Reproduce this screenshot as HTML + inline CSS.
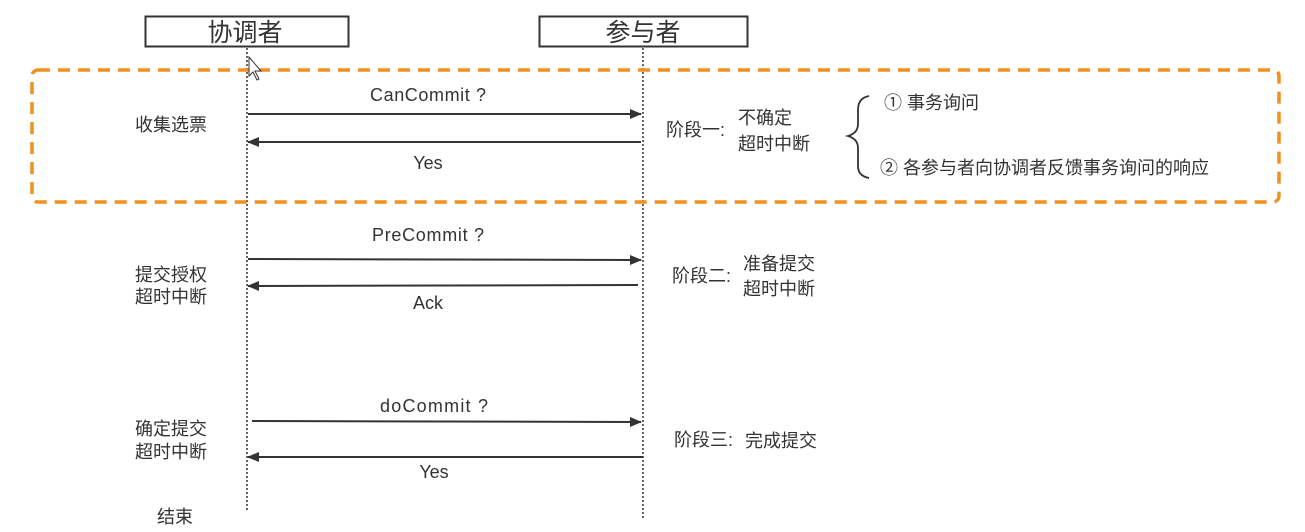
<!DOCTYPE html>
<html><head><meta charset="utf-8"><style>
html,body{margin:0;padding:0;background:#fff;}
svg{display:block;}
text{font-family:"Liberation Sans","Noto Sans CJK SC",sans-serif;fill:#333;}
</style></head><body>
<svg width="1305" height="532" viewBox="0 0 1305 532" xmlns="http://www.w3.org/2000/svg">
<defs>
<marker id="a" markerWidth="12" markerHeight="10" refX="11" refY="5" orient="auto" markerUnits="userSpaceOnUse">
<path d="M0,0 L12,5 L0,10 Z" fill="#333"/></marker>
</defs>
<rect x="145.5" y="16.5" width="203" height="30" fill="none" stroke="#333" stroke-width="2"/>
<rect x="539.5" y="16.5" width="208" height="30" fill="none" stroke="#333" stroke-width="2"/>
<text x="245" y="41" font-size="25" text-anchor="middle">协调者</text>
<text x="643" y="41" font-size="25" text-anchor="middle">参与者</text>
<line x1="247" y1="48" x2="247" y2="512" stroke="#333" stroke-width="1.5" stroke-dasharray="2,2"/>
<line x1="643" y1="48" x2="643" y2="518" stroke="#333" stroke-width="1.5" stroke-dasharray="2,2"/>
<rect x="32" y="70" width="1247" height="132" rx="6" fill="none" stroke="#f0901e" stroke-width="3.5" stroke-dasharray="12,8"/>
<path d="M249,57 L249,76 L253,72 L257,80 L259,79 L255,71 L261,71 Z" fill="#fff" stroke="#333" stroke-width="1"/>
<g stroke="#333" stroke-width="2">
<line x1="248" y1="114" x2="641" y2="114" marker-end="url(#a)"/>
<line x1="641" y1="142" x2="248" y2="142" marker-end="url(#a)"/>
<line x1="248" y1="259" x2="641" y2="260" marker-end="url(#a)"/>
<line x1="638" y1="285" x2="248" y2="286" marker-end="url(#a)"/>
<line x1="252" y1="421" x2="641" y2="422" marker-end="url(#a)"/>
<line x1="643" y1="457" x2="248" y2="457" marker-end="url(#a)"/>
</g>
<g font-size="18">
<text x="428" y="101" text-anchor="middle" textLength="116">CanCommit ?</text>
<text x="428" y="169" text-anchor="middle">Yes</text>
<text x="428" y="241" text-anchor="middle" textLength="112">PreCommit ?</text>
<text x="428" y="309" text-anchor="middle">Ack</text>
<text x="434" y="412" text-anchor="middle" textLength="108">doCommit ?</text>
<text x="434" y="478" text-anchor="middle">Yes</text>
<text x="135" y="131">收集选票</text>
<text x="135" y="281">提交授权</text>
<text x="135" y="303">超时中断</text>
<text x="135" y="435">确定提交</text>
<text x="135" y="458">超时中断</text>
<text x="157" y="523">结束</text>
<text x="666" y="136">阶段一:</text>
<text x="738" y="124">不确定</text>
<text x="738" y="150">超时中断</text>
<text x="672" y="282">阶段二:</text>
<text x="743" y="270">准备提交</text>
<text x="743" y="295">超时中断</text>
<text x="674" y="446">阶段三:</text>
<text x="745" y="447">完成提交</text>
<text x="884" y="109">①  事务询问</text>
<text x="880" y="174">② 各参与者向协调者反馈事务询问的响应</text>
</g>
<path d="M869,96 Q858,98 858,110 L858,124 Q858,133 848,136 Q858,139 858,148 L858,166 Q858,176 869,178" fill="none" stroke="#333" stroke-width="1.8"/>
</svg>
</body></html>
